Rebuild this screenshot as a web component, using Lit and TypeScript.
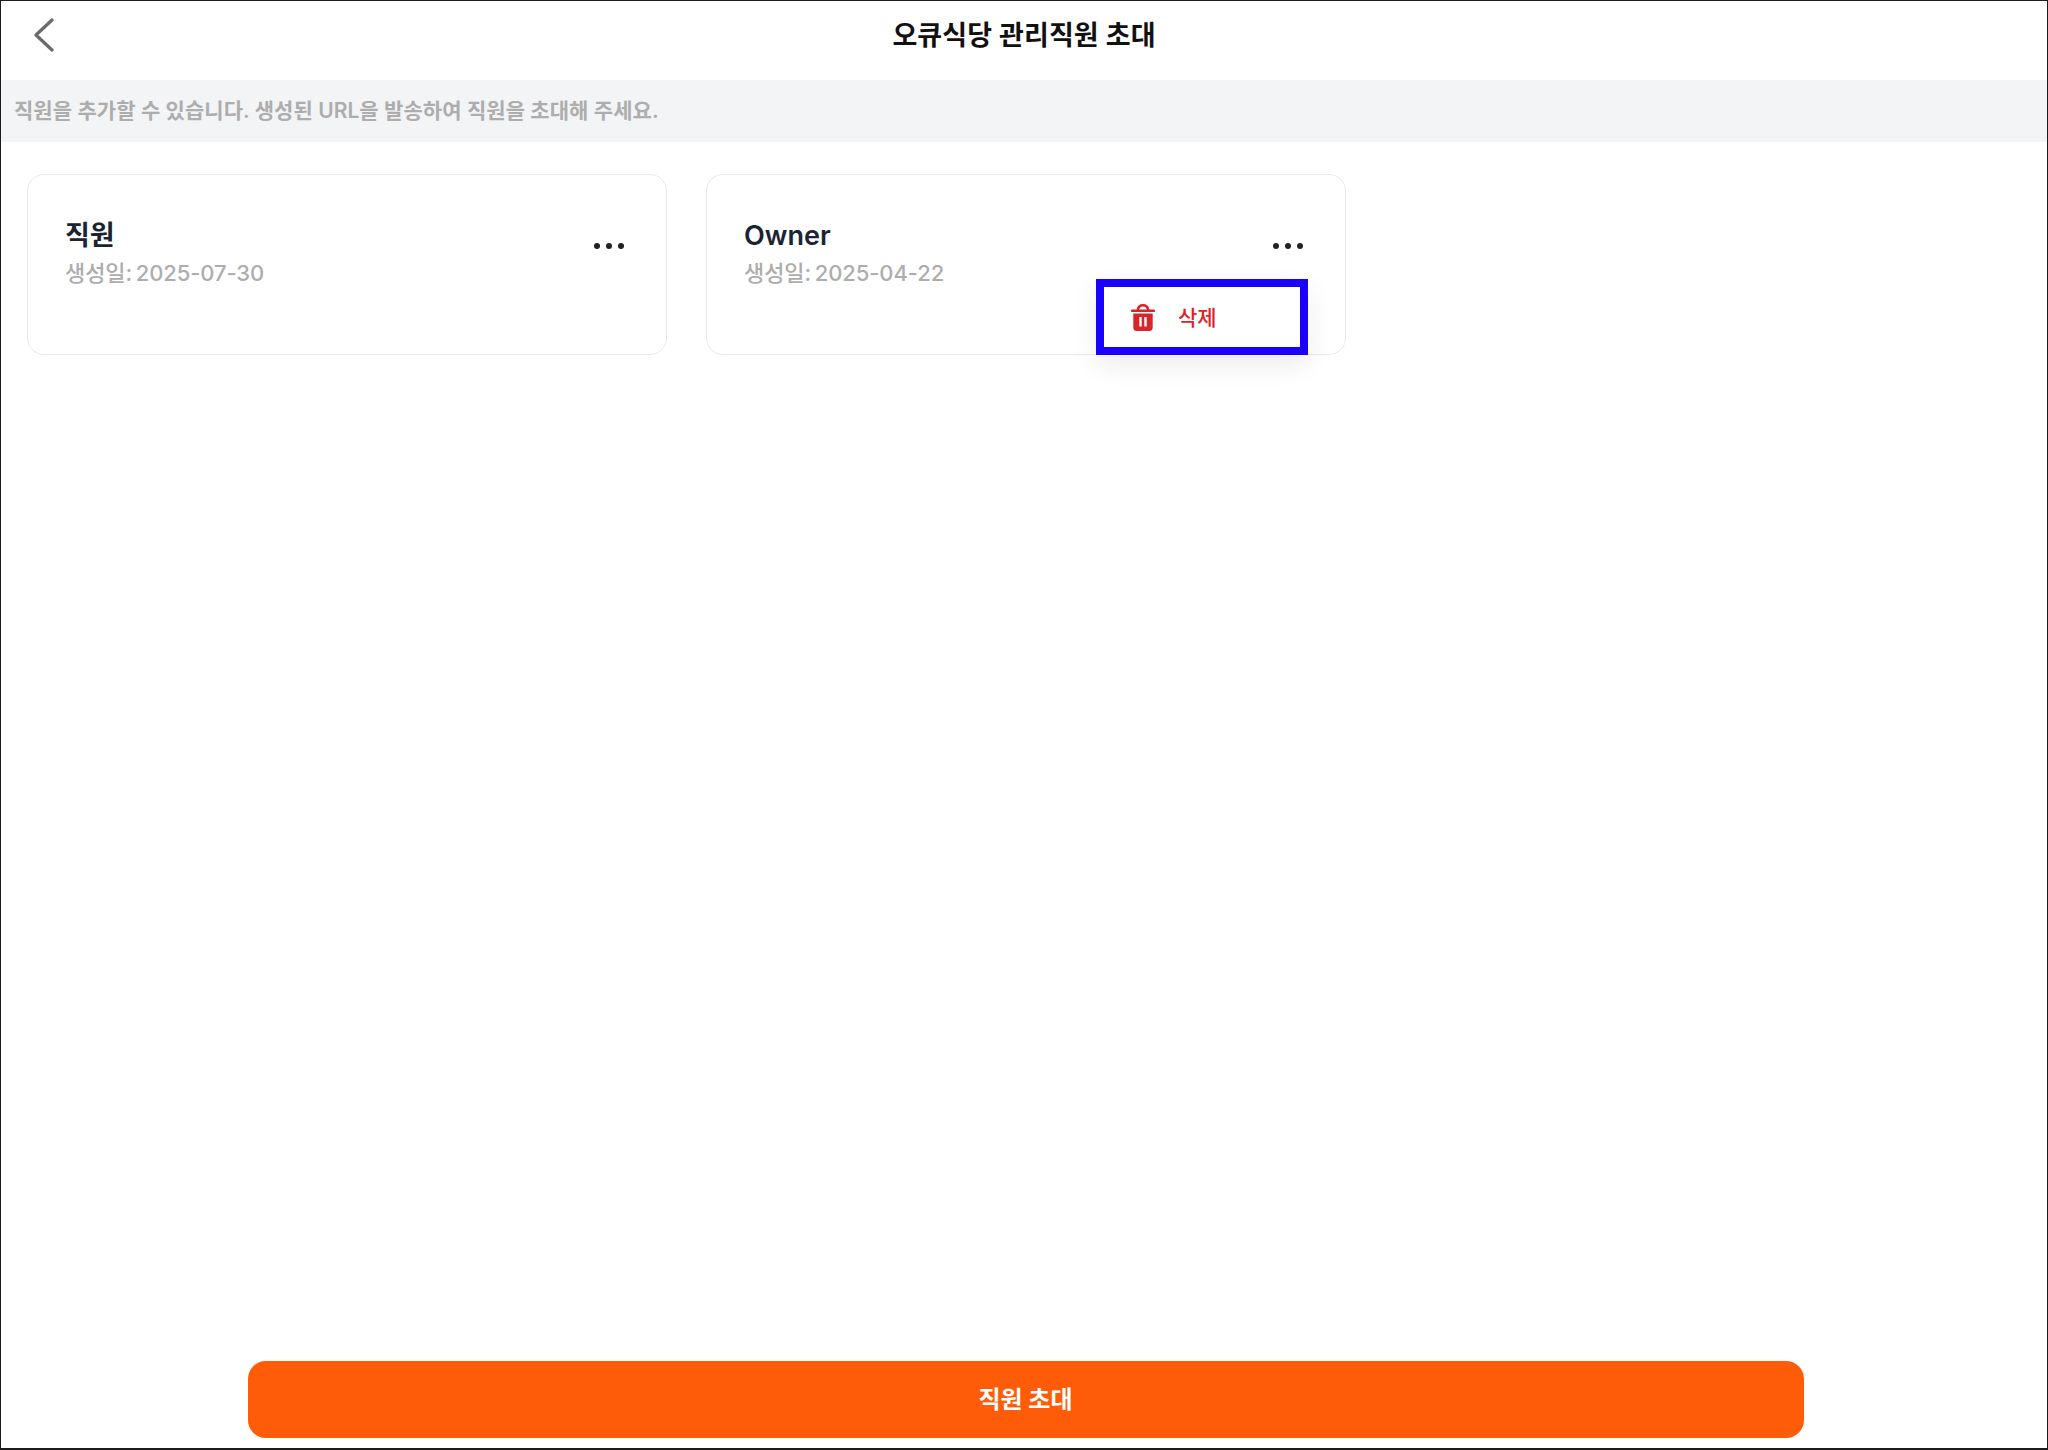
import { LitElement, html, css, svg } from "lit";
import { customElement } from "lit/decorators.js";

@customElement("app-root")
export class AppRoot extends LitElement {
  static styles = css`
    :host {
      display: block;
      font-family: Inter, "Noto Sans CJK KR", sans-serif;
    }
    * { box-sizing: border-box; }
    .page {
      width: 2048px;
      height: 1450px;
      border: 1px solid #1c1c1c;
      border-width: 1px 1px 2px 1px;
      background: #fff;
      display: flex;
      flex-direction: column;
      overflow: hidden;
    }
    .header {
      height: 79px;
      flex: none;
      position: relative;
      display: flex;
      align-items: center;
      justify-content: center;
      padding-bottom: 14px;
    }
    .back {
      position: absolute;
      left: 30px;
      top: 17px;
      width: 24px;
      height: 34px;
    }
    .title {
      font-size: 27px;
      font-weight: 600;
      color: #111;
      letter-spacing: 0.1px;
    }
    .notice {
      height: 62px;
      flex: none;
      background: #f3f4f6;
      display: flex;
      align-items: center;
      padding: 0 0 5px 13px;
      font-size: 21px;
      font-weight: 600;
      color: #adadad;
      letter-spacing: 0.05px;
    }
    .cards {
      flex: 1;
      display: flex;
      align-items: flex-start;
      gap: 39px;
      padding: 32px 0 0 26px;
    }
    .card {
      width: 640px;
      height: 181px;
      border: 1px solid #e9e9eb;
      border-radius: 17px;
      padding: 44px 37px 0;
      position: relative;
    }
    .name {
      font-size: 27px;
      font-weight: 600;
      line-height: 34px;
      margin-bottom: 3px;
      color: #1a2433;
    }
    .date {
      font-size: 22px;
      font-weight: 500;
      line-height: 34px;
      color: #adadad;
      letter-spacing: -0.1px;
      word-spacing: -2px;
    }
    .dots {
      position: absolute;
      right: 42px;
      top: 68px;
      display: flex;
      gap: 6px;
    }
    .dots span {
      width: 6px;
      height: 6px;
      border-radius: 50%;
      background: #1f2328;
    }
    .menu {
      position: absolute;
      left: 389px;
      top: 104px;
      width: 212px;
      height: 76px;
      border: 8px solid #1a00ff;
      background: #fff;
      display: flex;
      align-items: center;
      gap: 23px;
      padding: 0 0 2px 27px;
      font-size: 21px;
      font-weight: 500;
      color: #d9242a;
      box-shadow: 0 10px 24px rgba(0, 0, 0, 0.08);
    }
    .menu svg { flex: none; margin-top: 2px; }
    .footer {
      flex: none;
      display: flex;
      justify-content: center;
      padding-bottom: 10px;
    }
    .invite {
      width: 1556px;
      height: 77px;
      margin-left: 3px;
      border-radius: 18px;
      background: #ff5c0a;
      color: #fff;
      display: flex;
      align-items: center;
      justify-content: center;
      padding-bottom: 5px;
      font-size: 24px;
      font-weight: 700;
    }
  `;

  private card(name: string, date: string, withMenu: boolean) {
    return html`
      <div class="card">
        <div class="name">${name}</div>
        <div class="date">생성일: ${date}</div>
        <div class="dots"><span></span><span></span><span></span></div>
        ${withMenu
          ? html`<div class="menu">
              <svg width="24" height="27" viewBox="0 0 24 27">
                ${svg`<path fill="#d9242a" d="M12 0a6.5 6.5 0 0 0-6.4 5.5H1.2a1.2 1.2 0 0 0 0 2.6h21.6a1.2 1.2 0 0 0 0-2.6h-4.4A6.5 6.5 0 0 0 12 0Zm0 2.4a4 4 0 0 1 3.8 3.1H8.2A4 4 0 0 1 12 2.400Z"/>
                <path fill="#d9242a" fill-rule="evenodd" d="M2.300 9.500h19.400v14a3.500 3.500 0 0 1-3.500 3.500H5.800a3.500 3.500 0 0 1-3.500-3.500ZM8.300 13v9.500h2.400V13Zm5 0v9.500h2.400V13Z"/>`}
              </svg>
              <span>삭제</span>
            </div>`
          : ""}
      </div>
    `;
  }

  render() {
    return html`
      <div class="page">
        <div class="header">
          <svg class="back" viewBox="0 0 24 34" fill="none">
            <path d="M21 2 5 17l16 15" stroke="#6b6b6b" stroke-width="3.200" stroke-linecap="round" stroke-linejoin="round" />
          </svg>
          <div class="title">오큐식당 관리직원 초대</div>
        </div>
        <div class="notice">직원을 추가할 수 있습니다. 생성된 URL을 발송하여 직원을 초대해 주세요.</div>
        <div class="cards">
          ${this.card("직원", "2025-07-30", false)}
          ${this.card("Owner", "2025-04-22", true)}
        </div>
        <div class="footer"><div class="invite">직원 초대</div></div>
      </div>
    `;
  }
}
